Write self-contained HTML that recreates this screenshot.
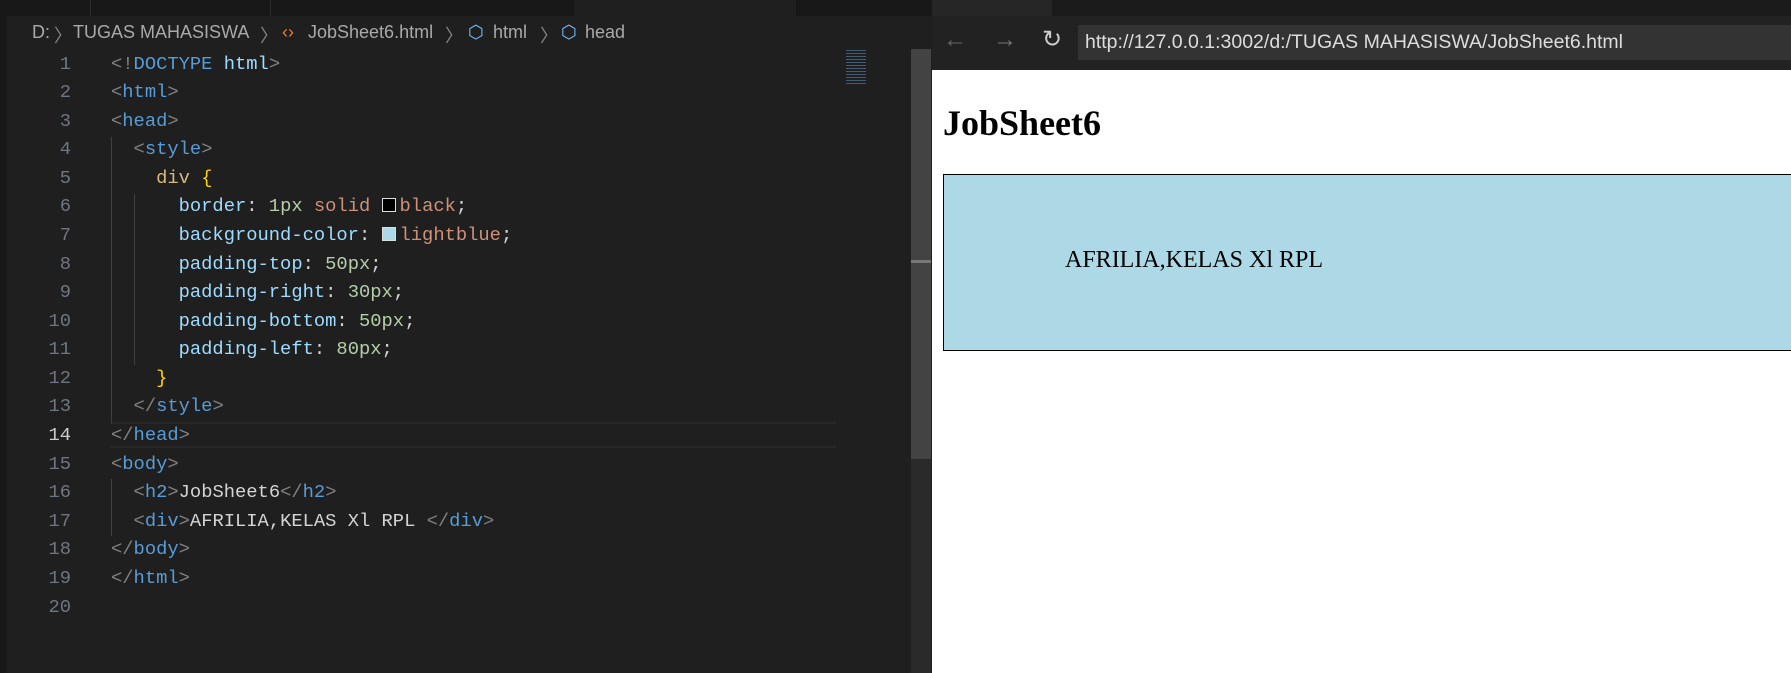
<!DOCTYPE html>
<html><head><style>
*{margin:0;padding:0;box-sizing:border-box}
body{width:1791px;height:673px;overflow:hidden;background:#1f1f1f;position:relative;font-family:"Liberation Sans",sans-serif}
.abs{position:absolute}
.code{font-family:"Liberation Mono",monospace;font-size:18.8px;white-space:pre;color:#d4d4d4}
.ln{position:absolute;left:0;width:71px;text-align:right;color:#6e7681;font-family:"Liberation Mono",monospace;font-size:18.8px}
.t{color:#808080}.n{color:#569cd6}.p{color:#9cdcfe}.v{color:#ce9178}.num{color:#b5cea8}.s{color:#d7ba7d}.b{color:#ffd700}
.sw{display:inline-block;width:14px;height:14px;border:1.5px solid #ddd;vertical-align:-1px;margin-right:4px}
.bc{position:absolute;top:22px;font-size:18px;color:#a9a9a9;white-space:nowrap}
</style></head><body>
<div class="abs" style="left:0;top:0;width:932px;height:16px;background:#181818"></div>
<div class="abs" style="left:90px;top:0;width:1px;height:16px;background:#2b2b2b"></div>
<div class="abs" style="left:270px;top:0;width:1px;height:16px;background:#2b2b2b"></div>
<div class="abs" style="left:574px;top:0;width:222px;height:16px;background:#1f1f1f"></div>
<div class="abs" style="left:0;top:0;width:7px;height:673px;background:#181818"></div>
<div class="bc" style="left:32px">D:</div>
<div class="bc" style="left:54px;color:#888">〉</div>
<div class="bc" style="left:73px">TUGAS MAHASISWA</div>
<div class="bc" style="left:260px;color:#888">〉</div>
<div class="bc" style="left:282px;color:#e37933">‹›</div>
<div class="bc" style="left:308px">JobSheet6.html</div>
<div class="bc" style="left:445px;color:#888">〉</div>
<div class="bc" style="left:468px;color:#75beff">⬡</div>
<div class="bc" style="left:493px">html</div>
<div class="bc" style="left:540px;color:#888">〉</div>
<div class="bc" style="left:561px;color:#75beff">⬡</div>
<div class="bc" style="left:585px">head</div>
<div class="abs" style="left:110px;top:422px;width:726px;height:26px;border-top:2px solid #282828;border-bottom:2px solid #282828"></div>
<div class="abs" style="left:111px;top:137px;width:1px;height:286px;background:#404040"></div>
<div class="abs" style="left:134px;top:194px;width:1px;height:171px;background:#404040"></div>
<div class="abs" style="left:111px;top:479px;width:1px;height:57px;background:#404040"></div>
<div id="lines"></div>
<div class="abs" style="left:846px;top:50px;width:20px;height:36px;background:repeating-linear-gradient(#4a6c8a 0 1px,transparent 1px 3px);opacity:.8"></div>
<div class="abs" style="left:911px;top:49px;width:20px;height:624px;background:#2a2a2a"></div>
<div class="abs" style="left:911px;top:49px;width:20px;height:410px;background:#434343"></div>
<div class="abs" style="left:911px;top:260px;width:20px;height:3px;background:#777"></div>
<div class="abs" style="left:932px;top:0;width:859px;height:16px;background:#1b1b1b"></div>
<div class="abs" style="left:932px;top:0;width:120px;height:16px;background:#262626"></div>
<div class="abs" style="left:932px;top:16px;width:859px;height:54px;background:#222"></div>
<div class="abs" style="left:943px;top:26px;font-size:24px;color:#666">←</div>
<div class="abs" style="left:993px;top:26px;font-size:24px;color:#777">→</div>
<div class="abs" style="left:1042px;top:25px;font-size:24px;color:#ccc">↻</div>
<div class="abs" style="left:1078px;top:25px;width:713px;height:35px;background:#333"></div>
<div class="abs" style="left:1085px;top:31px;font-size:19.5px;color:#ddd;white-space:nowrap">http://127.0.0.1:3002/d:/TUGAS MAHASISWA/JobSheet6.html</div>
<div class="abs" style="left:932px;top:70px;width:859px;height:603px;background:#fff"></div>
<div class="abs" style="left:943px;top:102px;font-family:'Liberation Serif',serif;font-weight:bold;font-size:36px;color:#000">JobSheet6</div>
<div class="abs" style="left:943px;top:174px;width:860px;height:177px;background:#add8e6;border:1px solid #000"></div>
<div class="abs" style="left:1065px;top:247px;font-family:'Liberation Serif',serif;font-size:24px;color:#000;white-space:nowrap">AFRILIA,KELAS Xl RPL</div>
<script>
var L=[
'<span class="t">&lt;!</span><span class="n">DOCTYPE</span> <span class="p">html</span><span class="t">&gt;</span>',
'<span class="t">&lt;</span><span class="n">html</span><span class="t">&gt;</span>',
'<span class="t">&lt;</span><span class="n">head</span><span class="t">&gt;</span>',
'  <span class="t">&lt;</span><span class="n">style</span><span class="t">&gt;</span>',
'    <span class="s">div</span> <span class="b">{</span>',
'      <span class="p">border</span>: <span class="num">1px</span> <span class="v">solid</span> <span class="sw" style="background:#000"></span><span class="v">black</span>;',
'      <span class="p">background-color</span>: <span class="sw" style="background:#add8e6"></span><span class="v">lightblue</span>;',
'      <span class="p">padding-top</span>: <span class="num">50px</span>;',
'      <span class="p">padding-right</span>: <span class="num">30px</span>;',
'      <span class="p">padding-bottom</span>: <span class="num">50px</span>;',
'      <span class="p">padding-left</span>: <span class="num">80px</span>;',
'    <span class="b">}</span>',
'  <span class="t">&lt;/</span><span class="n">style</span><span class="t">&gt;</span>',
'<span class="t">&lt;/</span><span class="n">head</span><span class="t">&gt;</span>',
'<span class="t">&lt;</span><span class="n">body</span><span class="t">&gt;</span>',
'  <span class="t">&lt;</span><span class="n">h2</span><span class="t">&gt;</span>JobSheet6<span class="t">&lt;/</span><span class="n">h2</span><span class="t">&gt;</span>',
'  <span class="t">&lt;</span><span class="n">div</span><span class="t">&gt;</span>AFRILIA,KELAS Xl RPL <span class="t">&lt;/</span><span class="n">div</span><span class="t">&gt;</span>',
'<span class="t">&lt;/</span><span class="n">body</span><span class="t">&gt;</span>',
'<span class="t">&lt;/</span><span class="n">html</span><span class="t">&gt;</span>',
''];
var h='';
for(var i=0;i<20;i++){var y=52.5+i*28.58;
h+='<div class="ln" style="top:'+y+'px;'+(i==13?'color:#ccc':'')+'">'+(i+1)+'</div>';
h+='<div class="abs code" style="left:111px;top:'+y+'px">'+L[i]+'</div>';}
document.getElementById('lines').innerHTML=h;
</script>
</body></html>
